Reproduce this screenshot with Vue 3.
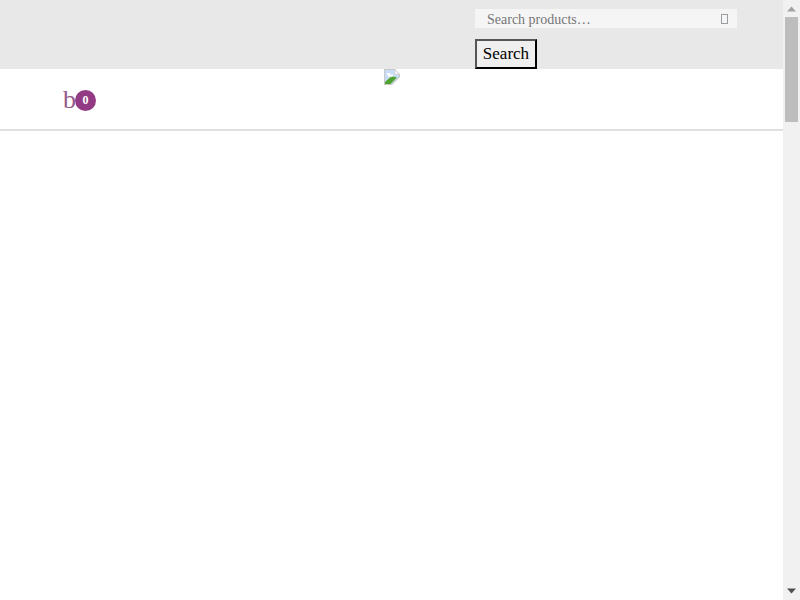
<script setup>
const query = ''
</script>

<template>
  <div class="page">
    <main class="main">
      <div class="topbar">
        <form class="search" @submit.prevent>
          <div class="field">
            <input class="input" type="search" :value="query" placeholder="Search products…" />
            <span class="tofu"></span>
          </div>
          <button class="btn" type="submit">Search</button>
        </form>
      </div>
      <header class="header">
        <div class="cart">
          <span class="cart-glyph">b</span>
          <span class="count">0</span>
        </div>
        <svg class="broken" width="16" height="16" viewBox="0 0 16 16" aria-label="Broken image">
          <path d="M0 0H11L16 5V8L8 16H0Z" fill="#c8c8c8" />
          <path d="M1 1H10.5V5.5H15V7.5L7.5 15H1Z" fill="#c9dcf8" />
          <path d="M3 4H6V5.5H9V7.5H4V6H3Z" fill="#fff" />
          <path d="M11 1L15 5H11Z" fill="#f4f4f4" />
          <path d="M1 15V13L6 8.5L9 7.5L13 8.5L6.5 15Z" fill="#4ea32f" />
          <path d="M9.5 16L16 9.5V16Z" fill="#fff" />
        </svg>
      </header>
    </main>
    <aside class="scrollbar" aria-hidden="true">
      <svg class="arrow" width="17" height="17" viewBox="0 0 17 17">
        <path d="M8.5 6.5L13 11.5H4Z" fill="#a3a3a3" />
      </svg>
      <div class="track"><div class="thumb"></div></div>
      <svg class="arrow" width="17" height="17" viewBox="0 0 17 17">
        <path d="M4 5.5H13L8.5 10.5Z" fill="#505050" />
      </svg>
    </aside>
  </div>
</template>

<style scoped>
.page {
  display: flex;
  height: 600px;
  background: #fff;
  font-family: "Liberation Serif", serif;
}
.main {
  flex: 1;
  min-width: 0;
}
.topbar {
  height: 69px;
  background: #e8e8e8;
  box-sizing: border-box;
  padding: 9px 0 0 475px;
}
.search {
  width: 262px;
}
.field {
  display: flex;
  align-items: center;
  height: 19px;
  background: #f5f5f5;
  padding: 0 9px 0 12px;
  margin-bottom: 11px;
}
.input {
  flex: 1;
  min-width: 0;
  border: 0;
  outline: 0;
  padding: 2px 0 0;
  background: transparent;
  font: 14px "Liberation Serif", serif;
  color: #555;
}
.input::placeholder {
  color: #757575;
  opacity: 1;
}
.tofu {
  width: 7px;
  height: 10px;
  box-sizing: border-box;
  border: 1px solid #9a9ea3;
}
.btn {
  display: block;
  box-sizing: border-box;
  width: 62px;
  height: 30px;
  padding: 0;
  border: 2px solid;
  border-color: #555 #000 #000 #555;
  background: #efefef;
  color: #000;
  font: 17px "Liberation Serif", serif;
}
.header {
  display: flex;
  align-items: flex-start;
  height: 62px;
  box-sizing: border-box;
  border-bottom: 2px solid #e0e0e0;
  padding-left: 63px;
}
.cart {
  display: flex;
  align-items: center;
  margin-top: 21px;
  height: 21px;
}
.cart-glyph {
  width: 12px;
  font-size: 26px;
  line-height: 19px;
  height: 21px;
  color: #96588a;
}
.count {
  width: 21px;
  height: 21px;
  border-radius: 50%;
  background: #933a84;
  color: #fff;
  font-size: 12px;
  font-weight: 700;
  line-height: 21px;
  text-align: center;
}
.broken {
  margin-left: 288px;
}
.scrollbar {
  display: flex;
  flex-direction: column;
  flex: none;
  width: 17px;
  background: #f1f1f1;
}
.arrow {
  display: block;
  flex: none;
}
.track {
  flex: 1;
  padding: 0 2px;
}
.thumb {
  height: 105px;
  background: #bdbdbd;
}
</style>

<style>
html, body { margin: 0; }
</style>
